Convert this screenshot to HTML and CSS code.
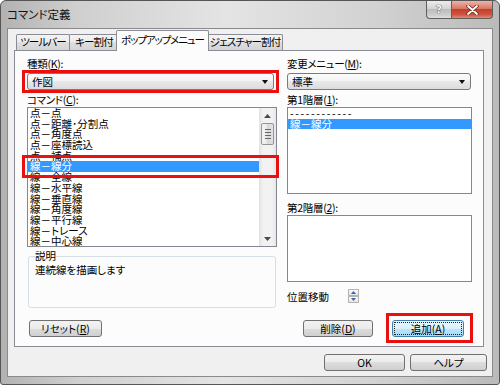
FILE: index.html
```html
<!DOCTYPE html>
<html lang="ja">
<head>
    <meta charset="UTF-8">
    <title>コマンド定義</title>
    <link rel="stylesheet" href="styles.css">
</head>
<body>
    <div class="window">
        <div class="titlebar">
            <span class="title">コマンド定義</span>
            <div class="caption">
                <span class="cap cap-help">?</span>
                <span class="cap cap-close">
                    <svg width="13" height="10" viewBox="0 0 13 10">
                        <path d="M2 1 L11 9 M11 1 L2 9" stroke="#6b2a22" stroke-width="3.4" stroke-linecap="round"/>
                        <path d="M2 1 L11 9 M11 1 L2 9" stroke="#ffffff" stroke-width="1.8" stroke-linecap="round"/>
                    </svg>
                </span>
            </div>
        </div>

        <div class="client">
            <div class="tabs">
                <div class="tab tab-toolbar">ツールバー</div>
                <div class="tab tab-key">キー割付</div>
                <div class="tab tab-popup active">ポップアップメニュー</div>
                <div class="tab tab-gesture">ジェスチャー割付</div>
            </div>

            <div class="panel">
                <div class="cols">
                    <div class="col-left">
                        <div class="label">種類(<u>K</u>):</div>
                        <div class="combo combo-left">
                            <span>作図</span>
                            <span class="arrow"></span>
                        </div>
                        <div class="label label-gap">コマンド(<u>C</u>):</div>
                        <div class="list list-cmd">
                            <div class="items">
                                <div class="item">点－点</div>
                                <div class="item">点－距離･分割点</div>
                                <div class="item">点－角度点</div>
                                <div class="item">点－座標読込</div>
                                <div class="item">点－補点</div>
                                <div class="item sel">線－線分</div>
                                <div class="item">線－全線</div>
                                <div class="item">線－水平線</div>
                                <div class="item">線－垂直線</div>
                                <div class="item">線－角度線</div>
                                <div class="item">線－平行線</div>
                                <div class="item">線－トレース</div>
                                <div class="item">線－中心線</div>
                            </div>
                            <div class="vscroll">
                                <div class="sb-arrow">
                                    <svg width="7" height="4" viewBox="0 0 7 4"><path d="M0 4 L3.5 0 L7 4 Z" fill="#4a4a4a"/></svg>
                                </div>
                                <div class="sb-thumb">
                                    <span></span><span></span><span></span><span></span>
                                </div>
                                <div class="sb-track"></div>
                                <div class="sb-arrow">
                                    <svg width="7" height="4" viewBox="0 0 7 4"><path d="M0 0 L3.5 4 L7 0 Z" fill="#4a4a4a"/></svg>
                                </div>
                            </div>
                        </div>
                        <fieldset class="group">
                            <legend>説明</legend>
                            <div>連続線を描画します</div>
                        </fieldset>
                    </div>

                    <div class="col-right">
                        <div class="label">変更メニュー(<u>M</u>):</div>
                        <div class="combo combo-right">
                            <span>標準</span>
                            <span class="arrow"></span>
                        </div>
                        <div class="label label-gap">第1階層(<u>1</u>):</div>
                        <div class="list list-lv1">
                            <div class="items">
                                <div class="item sep">------------</div>
                                <div class="item sel">線－線分</div>
                            </div>
                        </div>
                        <div class="label label-gap2">第2階層(<u>2</u>):</div>
                        <div class="list list-lv2">
                            <div class="items"></div>
                        </div>
                        <div class="move-row">
                            <span class="move-label">位置移動</span>
                            <div class="spin">
                                <span class="spin-btn">
                                    <svg width="5" height="3" viewBox="0 0 5 3"><path d="M0 3 L2.5 0 L5 3 Z" fill="#3d63a8"/></svg>
                                </span>
                                <span class="spin-btn">
                                    <svg width="5" height="3" viewBox="0 0 5 3"><path d="M0 0 L2.5 3 L5 0 Z" fill="#3d63a8"/></svg>
                                </span>
                            </div>
                        </div>
                    </div>
                </div>

                <div class="btn-row">
                    <button class="btn btn-reset">リセット(<u>R</u>)</button>
                    <button class="btn btn-del">削除(<u>D</u>)</button>
                    <button class="btn btn-add">追加(<u>A</u>)</button>
                </div>

                <!-- red marks drawn over the screenshot -->
                <div class="mark mark-kind"></div>
                <div class="mark mark-cmd"></div>
                <div class="mark mark-add"></div>
            </div>

            <div class="dlg-btns">
                <button class="btn btn-ok">OK</button>
                <button class="btn btn-help">ヘルプ</button>
            </div>
        </div>
    </div>
</body>
</html>
```

FILE: styles.css
```css
* {
    box-sizing: border-box;
}
body {
    margin: 0;
    font-family: "Noto Sans CJK JP", "Noto Sans", sans-serif;
    font-size: 10.5px;
    font-feature-settings: "palt";
    color: #000;
    background: #fff;
}
u {
    text-decoration-thickness: 1px;
    text-underline-offset: 1px;
}

/* window frame */
.window {
    width: 500px;
    height: 385px;
    border: 1px solid #555;
    border-radius: 6px 6px 3px 3px;
    padding: 0 6px;
    display: flex;
    flex-direction: column;
    background: linear-gradient(to right, #b2b2b2 0%, #cfcfcf 15%, #e4e4e4 45%, #d2d2d2 75%, #bababa 100%);
}
.titlebar {
    height: 27px;
    display: flex;
    flex-shrink: 0;
}
.title {
    padding-top: 5px;
    font-size: 11.5px;
    color: #111;
}
.caption {
    margin-left: auto;
    display: flex;
    align-items: flex-start;
}
.cap {
    height: 18px;
    display: flex;
    align-items: center;
    justify-content: center;
    border: 1px solid #5f5f5f;
    border-top: none;
}
.cap-help {
    width: 26px;
    border-radius: 0 0 0 4px;
    background: linear-gradient(#ececec, #d4d4d4 45%, #bcbcbc 50%, #cfcfcf 85%, #e2e2e2);
    color: #f8f8f8;
    font-family: "DejaVu Sans", sans-serif;
    font-weight: bold;
    font-size: 11px;
    text-shadow: 0 0 1px #444, 0 0 1px #444;
}
.cap-close {
    width: 41px;
    border-left: none;
    border-radius: 0 0 4px 0;
    background: linear-gradient(#eeb3a8, #d87766 45%, #c2402c 50%, #cf5540 80%, #e58a74);
}

/* client area */
.client {
    flex: 1;
    margin-bottom: 7px;
    background: #f0f0f0;
    border: 1px solid #8a8a8a;
}
.tabs {
    height: 21px;
    display: flex;
    align-items: flex-end;
    padding-left: 8px;
}
.tab {
    height: 16px;
    line-height: 14px;
    padding: 0;
    margin-right: -1px;
    text-align: center;
    letter-spacing: -0.9px;
    border: 1px solid #898c95;
    border-bottom: none;
    border-radius: 2px 2px 0 0;
    background: linear-gradient(#f4f4f4, #ebebeb 50%, #dedede 50%, #d4d4d4);
    white-space: nowrap;
}
.tab-toolbar {
    width: 54px;
}
.tab-key {
    width: 50px;
}
.tab-popup {
    width: 93px;
}
.tab-gesture {
    width: 76px;
}
.tab.active {
    height: 21px;
    line-height: 18px;
    margin: 0 -2px -1px -2px;
    letter-spacing: -1.1px;
    background: #fcfcfc;
    position: relative;
    z-index: 1;
}
.panel {
    position: relative;
    width: 470px;
    height: 297px;
    margin-left: 6px;
    padding: 7px 11px 0 12px;
    border: 1px solid #898c95;
    background: #fcfcfc;
}
.cols {
    display: flex;
    gap: 10px;
}
.col-left {
    width: 250px;
}
.col-right {
    width: 185px;
}
.label {
    height: 12px;
    line-height: 12px;
    letter-spacing: -0.3px;
    white-space: nowrap;
}
.label-gap {
    margin-top: 4px;
}
.label-gap2 {
    margin-top: 8px;
}

/* combo box */
.combo {
    margin-top: 3px;
    height: 17px;
    display: flex;
    align-items: center;
    padding: 0 5px 0 4px;
    border: 1px solid #7a7a7a;
    border-radius: 3px;
    background: linear-gradient(#fbfbfb, #f3f3f3 50%, #e8e8e8 50%, #dcdcdc);
}
.combo-left {
    width: 247px;
}
.combo-right {
    width: 184px;
}
.arrow {
    margin-left: auto;
    border-left: 3.5px solid transparent;
    border-right: 3.5px solid transparent;
    border-top: 4px solid #111;
}

/* list boxes */
.list {
    margin-top: 1px;
    display: flex;
    overflow: hidden;
    border: 1px solid #828790;
    background: #fff;
}
.list-cmd {
    height: 140px;
}
.list-lv1 {
    height: 87px;
}
.list-lv2 {
    height: 67px;
}
.items {
    flex: 1;
    overflow: hidden;
}
.item {
    height: 10.7px;
    line-height: 10.7px;
    padding-left: 2px;
    white-space: nowrap;
}
.item.sel {
    background: #3399ff;
    color: #fff;
}
.sep {
    letter-spacing: 1.6px;
}

.vscroll {
    width: 17px;
    display: flex;
    flex-direction: column;
    align-items: center;
    background: linear-gradient(to right, #e2e2e2, #f2f2f2 25%, #f2f2f2 75%, #e6e6e6);
}
.sb-arrow {
    height: 15px;
    display: flex;
    align-items: center;
    justify-content: center;
}
.sb-thumb {
    width: 13px;
    height: 22px;
    display: flex;
    flex-direction: column;
    align-items: center;
    justify-content: center;
    gap: 2px;
    border: 1px solid #959595;
    border-radius: 2px;
    background: linear-gradient(to right, #f4f4f4, #e9e9e9 50%, #d9d9d9 50%, #e2e2e2);
}
.sb-thumb span {
    width: 6px;
    height: 1px;
    background: #666;
}
.sb-track {
    flex: 1;
}

/* description group */
.group {
    margin: 3px 0 0 1px;
    width: 248px;
    height: 58px;
    min-width: 0;
    padding: 0 6px;
    border: 1px solid #d5dfe5;
    border-radius: 3px;
}
.group legend {
    padding: 0;
    line-height: 12px;
}

/* move up/down */
.move-row {
    margin-top: 7px;
    height: 14px;
    display: flex;
    align-items: center;
}
.move-label {
    width: 61px;
}
.spin {
    display: flex;
    flex-direction: column;
}
.spin-btn {
    width: 11px;
    height: 7px;
    display: flex;
    align-items: center;
    justify-content: center;
    border: 1px solid #b4b4b4;
    background: linear-gradient(#fafafa, #e6e6e6);
}

/* buttons */
.btn {
    height: 17px;
    padding: 0;
    font: inherit;
    line-height: 14px;
    color: #000;
    text-align: center;
    border: 1px solid #707070;
    border-radius: 3px;
    background: linear-gradient(#f2f2f2, #ebebeb 50%, #dddddd 50%, #cfcfcf);
}
.btn-row {
    display: flex;
    margin-top: 12px;
    padding-right: 8px;
}
.btn-reset {
    width: 73px;
    margin-left: 2px;
}
.btn-del {
    width: 70px;
    margin-left: auto;
}
.btn-add {
    width: 72px;
    margin-left: 19px;
    border-color: #3c7fb1;
    background: linear-gradient(#eaf6fd, #d9f0fc 50%, #bee6fd 50%, #a7d9f5);
    outline: 1px dotted #222;
    outline-offset: -3px;
}
.dlg-btns {
    display: flex;
    justify-content: flex-end;
    gap: 5px;
    margin-top: 7px;
    padding-right: 5px;
}
.btn-ok {
    width: 81px;
}
.btn-help {
    width: 77px;
}

/* red highlight marks */
.mark {
    position: absolute;
    border: 3px solid #ea1010;
}
.mark-kind {
    left: 7px;
    top: 19px;
    width: 257px;
    height: 23px;
}
.mark-cmd {
    left: 7px;
    top: 104px;
    width: 257px;
    height: 23px;
}
.mark-add {
    left: 371px;
    top: 262px;
    width: 87px;
    height: 30px;
}
```
